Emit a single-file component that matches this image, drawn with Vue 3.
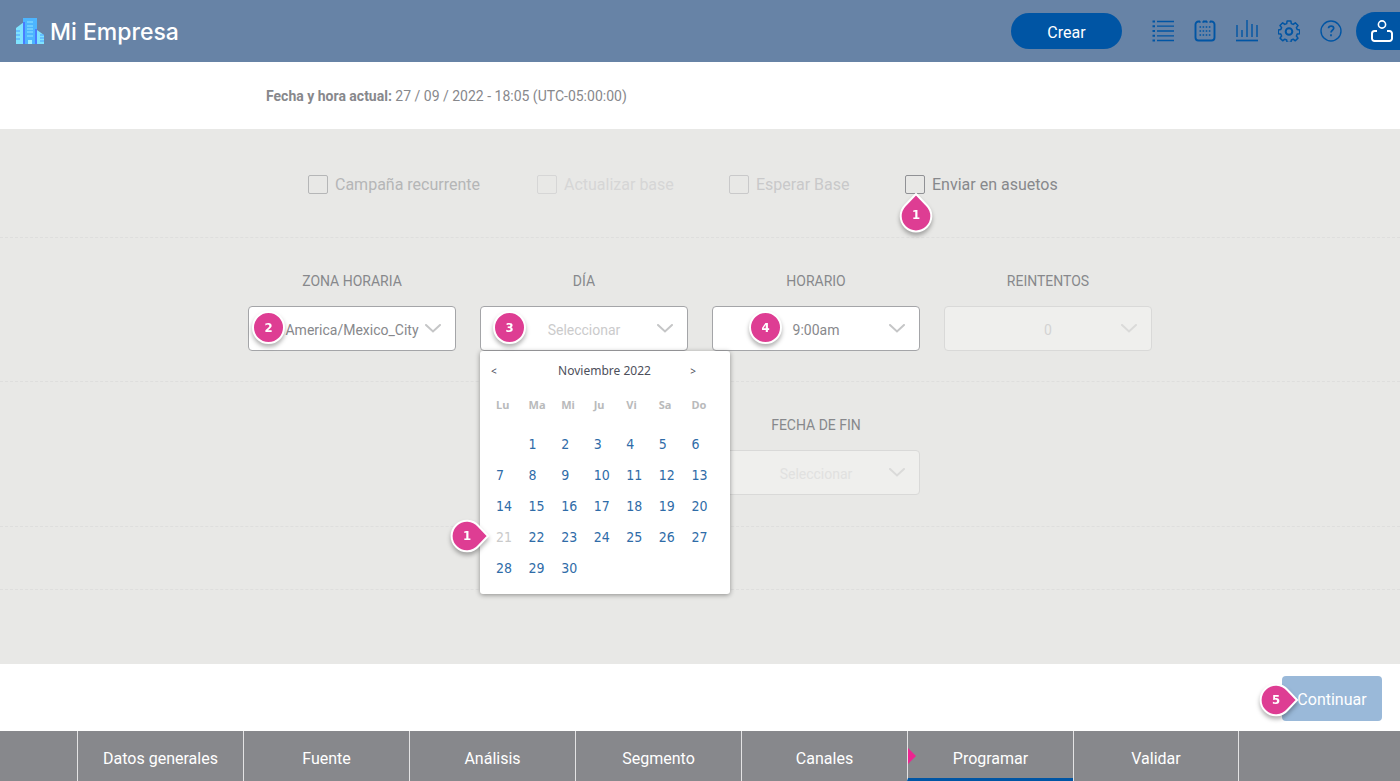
<script setup>
import { ref } from 'vue'

const options = ref([
  { id: 'recurrent', label: 'Campaña recurrente', tone: 'soft', disabled: true },
  { id: 'refresh', label: 'Actualizar base', tone: 'faint', disabled: true },
  { id: 'wait', label: 'Esperar Base', tone: 'dim', disabled: true },
  { id: 'holidays', label: 'Enviar en asuetos', tone: 'normal', disabled: false, pin: '1' }
])

const fields = [
  { id: 'zone', label: 'ZONA HORARIA', value: 'America/Mexico_City', pin: '2', pinClass: 'at-edge' },
  { id: 'day', label: 'DÍA', value: 'Seleccionar', pin: '3', pinClass: 'at-start', placeholder: true, calendar: true },
  { id: 'time', label: 'HORARIO', value: '9:00am', pin: '4', pinClass: 'at-middle' },
  { id: 'retries', label: 'REINTENTOS', value: '0', disabled: true }
]

const weekdays = ['Lu', 'Ma', 'Mi', 'Ju', 'Vi', 'Sa', 'Do']
const weeks = [
  [null, 1, 2, 3, 4, 5, 6],
  [7, 8, 9, 10, 11, 12, 13],
  [14, 15, 16, 17, 18, 19, 20],
  [21, 22, 23, 24, 25, 26, 27],
  [28, 29, 30, null, null, null, null]
]

const steps = ['Datos generales', 'Fuente', 'Análisis', 'Segmento', 'Canales', 'Programar', 'Validar']
const current = 'Programar'
</script>

<template>
  <div class="page">
    <header class="topbar">
      <a class="brand" href="#">
        <svg class="logo" width="28" height="26" viewBox="0 0 28 26" aria-hidden="true">
          <path d="M0 10 8 4v22H0z" fill="#7fe3ff" />
          <path d="M7 0h14v26H7z" fill="#4db5ff" />
          <path d="M7 4h2v22H7zM19 11h2v15h-2z" fill="#4a7dff" />
          <path d="M21 12l7 5v9h-7z" fill="#7fe3ff" />
          <path d="M11 4h6M11 8h6M11 11h6M11 14h6M11 18h6" stroke="#8fe8ff" stroke-width="1.2" />
          <path d="M0 13h4M0 17h4M0 21h4M24 17h4M24 20h4M24 23h4" stroke="#4a9dff" stroke-width="1.2" />
          <path d="M12 22h4v4h-4z" fill="#9ff0ff" />
        </svg>
        <span>Mi Empresa</span>
      </a>
      <div class="tools">
        <button class="create" type="button">Crear</button>
        <nav class="icons" aria-label="Herramientas">
          <button type="button" aria-label="Listas">
            <svg width="22" height="22" viewBox="0 0 22 22">
              <path d="M5 1.500h17M5 6.200h17M5 11h17M5 15.800h17M5 20.500h17" stroke-width="1.300" />
              <path d="M.5 1.500h2.500M.5 6.200h2.500M.5 11h2.500M.5 15.800h2.500M.5 20.500h2.500" stroke-width="2" />
            </svg>
          </button>
          <button type="button" aria-label="Calendario">
            <svg width="22" height="22" viewBox="0 0 22 22">
              <path d="M6 1.500H4.500a3 3 0 0 0-3 3v13a3 3 0 0 0 3 3h13a3 3 0 0 0 3-3v-13a3 3 0 0 0-3-3H16M9 1.500h4" stroke-width="1.900" />
              <path d="M6 1v2M16 1v2M9 1v2M13 1v2" stroke-width="1" />
              <path d="M5.500 7h12M5.500 11h12M5.500 15h12" stroke-width="1.600" stroke-dasharray="1.600 1.500" />
            </svg>
          </button>
          <button type="button" aria-label="Reportes">
            <svg width="22" height="22" viewBox="0 0 22 22">
              <path d="M1 5v12M6 10v7M11 0v17M16 4v13M21 5v12" stroke-width="1.400" />
              <path d="M0 20.500h22" stroke-width="1.700" />
            </svg>
          </button>
          <button type="button" aria-label="Configuración">
            <svg width="22" height="22" viewBox="0 0 22 22">
              <path d="M9.100 1h3.800l.4 2.600 1.900.8 2.100-1.600 2.700 2.700-1.600 2.100.8 1.900 2.500.4v3.800l-2.500.4-.8 1.900 1.600 2.100-2.700 2.700-2.100-1.600-1.900.8-.4 2.600H9.100l-.4-2.600-1.900-.8-2.100 1.600L2 18.100 3.600 16l-.8-1.900-2.500-.4V9.900l2.500-.4.8-1.900L2 5.500l2.700-2.700 2.100 1.600 1.900-.8z" stroke-width="1.500" stroke-linejoin="round" />
              <circle cx="11" cy="11.500" r="3.300" stroke-width="2" />
            </svg>
          </button>
          <button type="button" aria-label="Ayuda">
            <svg width="22" height="22" viewBox="0 0 22 22">
              <circle cx="11" cy="11" r="10" stroke-width="1.400" />
              <path d="M8.500 8.300c.2-3 5.200-3 5.200 0 0 2-2.700 2-2.700 4.200M11 14.300v2" stroke-width="1.700" />
            </svg>
          </button>
        </nav>
        <button class="user" type="button" aria-label="Mi cuenta">
          <svg width="22" height="22" viewBox="0 0 22 22">
            <circle cx="11" cy="4.500" r="3.600" stroke-width="1.600" />
            <path d="M6 11H3.500A2.500 2.500 0 0 0 1 13.500v5A2.500 2.500 0 0 0 3.500 21h15a2.500 2.500 0 0 0 2.500-2.500v-5a2.500 2.500 0 0 0-2.500-2.500H16" stroke-width="2" />
          </svg>
        </button>
      </div>
    </header>

    <div class="clock">
      <p class="wrap"><strong>Fecha y hora actual:</strong> 27 / 09 / 2022 - 18:05 (UTC-05:00:00)</p>
    </div>

    <main class="form">
      <section class="row options">
        <div class="wrap option-grid">
          <div v-for="o in options" :key="o.id" class="option" :class="o.tone">
            <input :id="o.id" type="checkbox" :disabled="o.disabled" />
            <label :for="o.id">{{ o.label }}</label>
            <span v-if="o.pin" class="pin below">
              <svg width="34" height="44" viewBox="0 0 34 44" aria-hidden="true">
                <path d="M17 3 28 14.500A15.300 15.300 0 1 1 6 14.500z" />
              </svg>
              <b>{{ o.pin }}</b>
            </span>
          </div>
        </div>
      </section>

      <section class="row fields">
        <div class="wrap grid">
          <div v-for="f in fields" :key="f.id" class="field" :class="{ off: f.disabled, empty: f.placeholder }">
            <label :for="f.id">{{ f.label }}</label>
            <div class="control">
              <select :id="f.id" :disabled="f.disabled">
                <option>{{ f.value }}</option>
              </select>
              <svg class="chevron" width="16" height="10" viewBox="0 0 16 10" aria-hidden="true"><path d="m1 1 7 6.500L15 1" /></svg>
              <span v-if="f.pin" class="pin round" :class="f.pinClass"><b>{{ f.pin }}</b></span>
              <div v-if="f.calendar" class="calendar">
                <div class="month">
                  <button type="button" aria-label="Mes anterior">&lt;</button>
                  <span>Noviembre 2022</span>
                  <button type="button" aria-label="Mes siguiente">&gt;</button>
                </div>
                <table>
                  <thead>
                    <tr><th v-for="w in weekdays" :key="w" scope="col">{{ w }}</th></tr>
                  </thead>
                  <tbody>
                    <tr v-for="(week, i) in weeks" :key="i">
                      <td v-for="(d, j) in week" :key="j">
                        <button v-if="d" type="button" :disabled="d === 21">{{ d }}</button>
                        <span v-if="d === 21" class="pin beside">
                          <svg width="44" height="34" viewBox="0 0 44 34" aria-hidden="true">
                            <path d="M38 17 28.500 7A15.300 15.300 0 1 0 28.500 27z" />
                          </svg>
                          <b>1</b>
                        </span>
                      </td>
                    </tr>
                  </tbody>
                </table>
              </div>
            </div>
          </div>
        </div>
      </section>

      <section class="row fields">
        <div class="wrap grid">
          <div class="field off end vague">
            <label for="end">FECHA DE FIN</label>
            <div class="control">
              <select id="end" disabled><option>Seleccionar</option></select>
              <svg class="chevron" width="16" height="10" viewBox="0 0 16 10" aria-hidden="true"><path d="m1 1 7 6.500L15 1" /></svg>
            </div>
          </div>
        </div>
      </section>
      <div class="row spacer"></div>
    </main>

    <div class="actions">
      <div class="action">
        <button class="continue" type="button">Continuar</button>
        <span class="pin lead">
          <svg width="44" height="34" viewBox="0 0 44 34" aria-hidden="true">
            <path d="M38 17 28.500 7A15.300 15.300 0 1 0 28.500 27z" />
          </svg>
          <b>5</b>
        </span>
      </div>
    </div>

    <nav class="steps" aria-label="Pasos">
      <a v-for="s in steps" :key="s" href="#" :class="{ current: s === current }" :aria-current="s === current ? 'step' : undefined">{{ s }}</a>
    </nav>
  </div>
</template>

<style>
body {
  margin: 0;
}
</style>

<style scoped>
.page {
  min-height: 100vh;
  display: flex;
  flex-direction: column;
  background: #fff;
  color: #87888c;
  font: 14px/20px Roboto, "Liberation Sans", sans-serif;
}
.page *,
.page *::before {
  box-sizing: border-box;
}
button,
select {
  font: inherit;
  margin: 0;
}
button {
  padding: 0;
  border: 0;
  background: none;
  cursor: pointer;
}
.wrap {
  width: 100%;
  max-width: 904px;
  margin: 0 auto;
}
.topbar {
  height: 62px;
  display: flex;
  align-items: center;
  justify-content: space-between;
  padding-left: 16px;
  background: #6783a6;
}
.brand {
  display: flex;
  align-items: center;
  gap: 6px;
  color: #fff;
  text-decoration: none;
  font: 500 23px/28px Inter, sans-serif;
}
.brand span {
  padding-top: 2px;
}
.tools {
  display: flex;
  align-items: center;
}
.create {
  width: 111px;
  height: 36px;
  border-radius: 18px;
  background: #0055a4;
  color: #fff;
  font-size: 16px;
  padding-top: 3px;
}
.icons {
  display: flex;
  gap: 20px;
  margin: 0 14px 0 30px;
}
.icons button {
  display: flex;
}
.icons svg,
.user svg {
  fill: none;
  stroke: #0055a4;
}
.user {
  width: 44px;
  height: 38px;
  display: flex;
  align-items: center;
  padding-left: 15px;
  border-radius: 19px 0 0 19px;
  background: #0055a4;
}
.user svg {
  stroke: #fff;
}
.clock {
  height: 67px;
  display: flex;
  align-items: center;
}
.clock p {
  padding-left: 18px;
}
.form {
  flex: 1;
  background: #e8e8e6;
}
.row {
  border-bottom: 1px dashed #dededd;
}
.options {
  height: 109px;
  padding-top: 44px;
}
.option-grid {
  display: grid;
  grid-template-columns: 229px 192px 176px auto;
  padding-left: 60px;
}
.option {
  position: relative;
  display: flex;
  align-items: center;
  gap: 7px;
  font-size: 16px;
}
.option input {
  appearance: none;
  width: 20px;
  height: 19px;
  margin: 0;
  border: 1px solid #909195;
  border-radius: 2px;
}
.option label {
  padding-top: 2px;
}
.soft {
  color: #b5b6b7;
}
.faint {
  color: #d6d6d6;
}
.dim {
  color: #c9c9ca;
}
.soft input {
  border-color: #b5b6b7;
}
.faint input {
  border-color: #d6d6d6;
}
.dim input {
  border-color: #c9c9ca;
}
.fields {
  height: 144px;
  padding-top: 33px;
}
.fields + .fields {
  height: 145px;
}
.grid {
  display: grid;
  grid-template-columns: repeat(4, 1fr);
  gap: 24px;
}
.field {
  display: flex;
  flex-direction: column;
  gap: 15px;
}
.field > label {
  text-align: center;
}
.end {
  grid-column: 3;
}
.control {
  position: relative;
}
.control select {
  appearance: none;
  display: block;
  width: 100%;
  height: 45px;
  padding: 2px 20px 0;
  border: 1px solid #a4a5a8;
  border-radius: 4px;
  background: #fff;
  color: #87888c;
  opacity: 1;
  text-align: center;
  text-align-last: center;
}
.empty select {
  color: #cbcbcc;
}
.off select {
  border-color: #d9d9d8;
  background: #efefed;
  color: #d3d3d3;
}
.vague select {
  color: #e1e1e0;
}
.chevron {
  position: absolute;
  top: 18px;
  right: 15px;
  fill: none;
  stroke: #c5c6c7;
  stroke-width: 2;
  stroke-linecap: round;
  pointer-events: none;
}
.off .chevron {
  stroke: #dadad9;
}
.pin {
  position: absolute;
  z-index: 3;
  display: flex;
  align-items: center;
  justify-content: center;
  color: #fff;
  font: bold 13px/16px "DejaVu Sans Condensed", "DejaVu Sans", sans-serif;
  pointer-events: none;
  filter: drop-shadow(0 3px 2px rgba(0, 0, 0, 0.3));
}
.pin svg {
  fill: #de3d93;
  stroke: #fff;
  stroke-width: 2;
}
.pin b {
  position: absolute;
}
.round {
  top: 5px;
  width: 33px;
  height: 33px;
  border: 2px solid #fff;
  border-radius: 50%;
  background: #de3d93;
}
.at-edge {
  left: 4px;
}
.at-start {
  left: 13px;
}
.at-middle {
  left: 37px;
}
.below {
  top: 18px;
  left: -6px;
}
.below b {
  top: 16px;
}
.calendar {
  position: absolute;
  z-index: 2;
  top: 45px;
  left: 0;
  width: 250px;
  padding: 10px 6px 11px 16px;
  border-radius: 3px;
  background: #fff;
  box-shadow: 0 1px 5px rgba(0, 0, 0, 0.4);
}
.month {
  display: flex;
  justify-content: space-between;
  margin: 0 28px 14px -5px;
  color: #4d4f5b;
  font: 12px/20px "Noto Sans", sans-serif;
}
.month span {
  padding-left: 22px;
}
.month button {
  color: inherit;
  font-size: 10px;
}
table {
  width: 100%;
  table-layout: fixed;
  border-collapse: collapse;
}
th {
  height: 20px;
  padding: 0;
  color: #b9babb;
  font: bold 11px/20px "Noto Sans", sans-serif;
  text-align: left;
}
td {
  position: relative;
  height: 31px;
  padding: 0;
}
tbody::before {
  content: "";
  display: table-row;
  height: 13px;
}
td button {
  display: block;
  color: #2f6ca8;
  font: 14px/20px "DejaVu Sans Condensed", "DejaVu Sans", sans-serif;
}
td button:disabled {
  color: #cacaca;
}
.beside {
  top: -2px;
  left: -46px;
}
.beside b,
.lead b {
  left: 13px;
}
.fields + .spacer {
  height: 63px;
}
.actions {
  height: 67px;
  display: flex;
  align-items: center;
  justify-content: flex-end;
  padding: 1px 18px 0 0;
}
.action {
  position: relative;
}
.continue {
  display: block;
  width: 100px;
  height: 45px;
  border-radius: 4px;
  background: #9ab9d9;
  color: #fff;
  font-size: 16px;
  padding-top: 3px;
}
.lead {
  top: 7px;
  left: -23px;
}
.steps {
  height: 50px;
  display: grid;
  grid-template-columns: repeat(7, 1fr);
  padding-right: 11.5%;
  padding-left: 5.5%;
  background: #87888c;
}
.steps a {
  position: relative;
  display: flex;
  align-items: center;
  justify-content: center;
  padding-top: 5px;
  border-left: 1px solid #e3e3e4;
  color: #fff;
  font-size: 16px;
  text-decoration: none;
}
.steps a:last-child {
  border-right: 1px solid #e3e3e4;
}
.steps .current {
  padding-top: 8px;
  border-bottom: 3px solid #0055a4;
}
.current::before {
  content: "";
  position: absolute;
  top: 17px;
  left: 0;
  border: 8px solid transparent;
  border-left: 8px solid #ec2490;
  border-right: 0;
}
</style>
